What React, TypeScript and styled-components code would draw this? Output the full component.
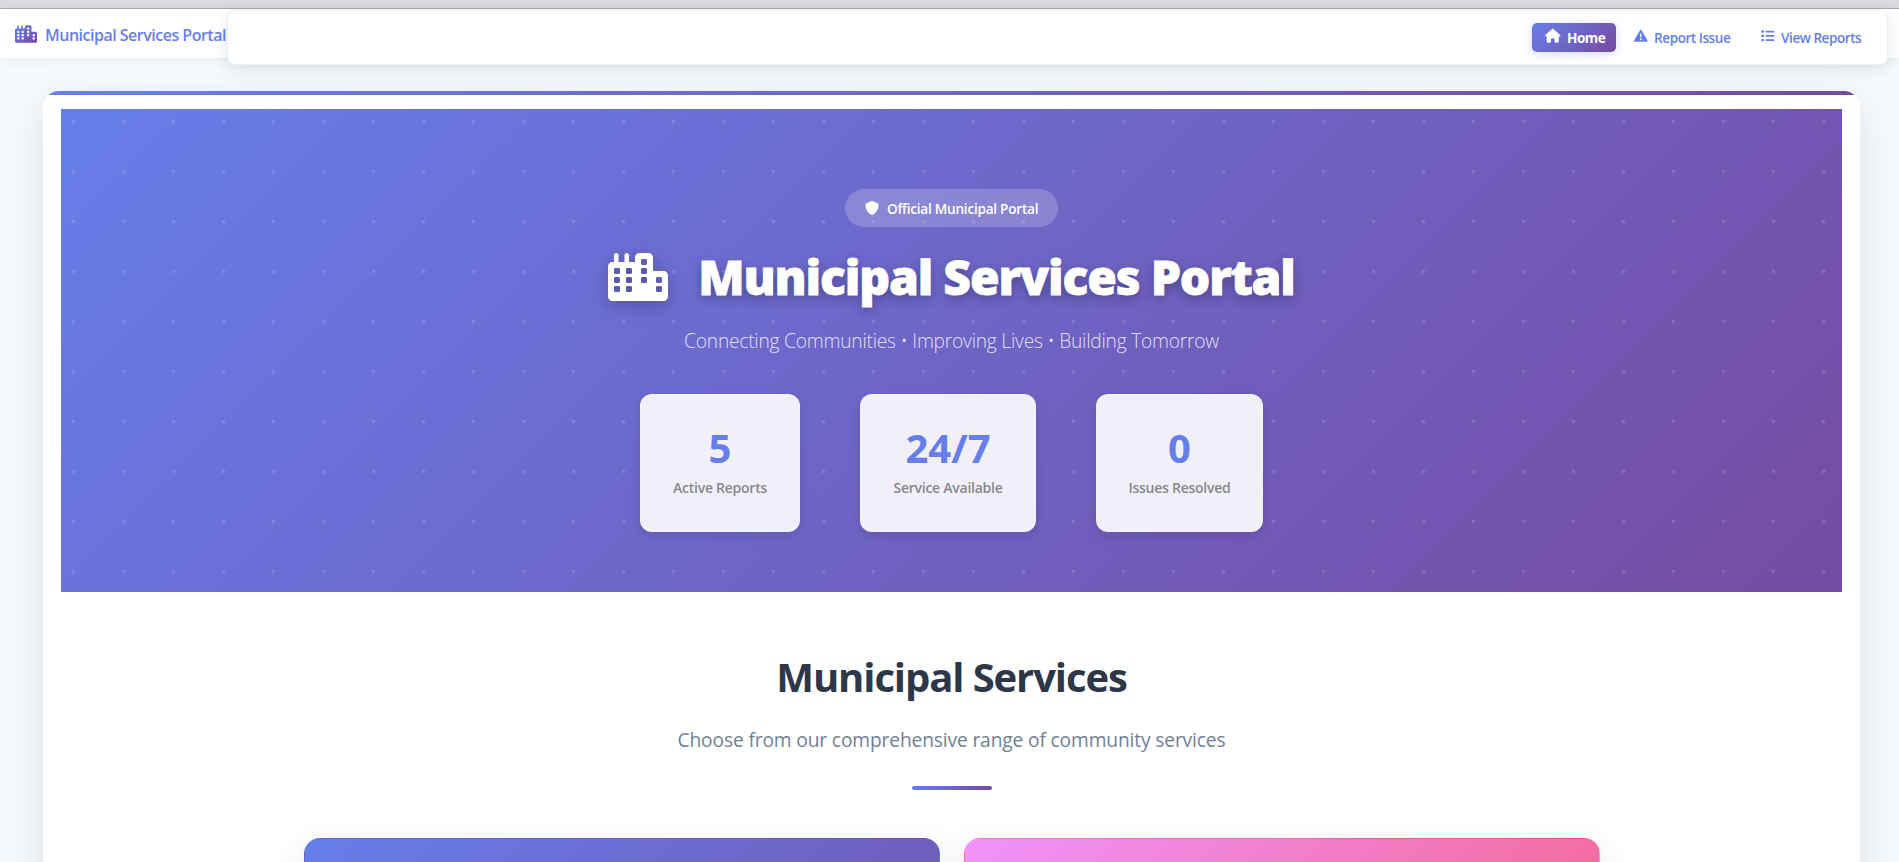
import React from "react";
import styled, { createGlobalStyle } from "styled-components";
import { FaCity, FaHouse, FaTriangleExclamation, FaList, FaShield } from "react-icons/fa6";

const brandGradient = "linear-gradient(135deg, #667eea 0%, #764ba2 100%)";

const GlobalStyle = createGlobalStyle`
  *, *::before, *::after { box-sizing: border-box; }
  html, body { margin: 0; padding: 0; }
  body {
    height: 862px;
    overflow: hidden;
    background: #f7fafc;
    font-family: "Open Sans", "Noto Sans", sans-serif;
    color: #2d3748;
  }
  h1, h2, p { margin: 0; }
`;

const Page = styled.div`
  height: 862px;
  overflow: hidden;
  background: linear-gradient(135deg, #f5fafe 0%, #f7fafc 100%);
`;

const WindowEdge = styled.div`
  height: 9px;
  background: #d9dadf;
  border-bottom: 1px solid #a9abb0;
`;

const Header = styled.header`
  position: relative;
  z-index: 2;
  display: flex;
  align-items: flex-start;
  height: 50px;
  padding: 1px 11px 0 15px;
  background: #fff;
  border-bottom: 1px solid #eeeffc;
  box-shadow: 0 2px 10px rgba(0, 0, 0, 0.05);
`;

const Brand = styled.a`
  display: flex;
  align-items: center;
  flex: none;
  gap: 8px;
  width: 212px;
  height: 49px;
  color: #667eea;
  font-size: 16px;
  font-weight: 600;
  line-height: 1;
  letter-spacing: -0.5px;
  white-space: nowrap;

  svg { margin-bottom: 2px; flex: none; }
`;

const Nav = styled.nav`
  display: flex;
  flex: 1;
  justify-content: flex-end;
  align-items: center;
  gap: 5px;
  height: 55px;
  padding: 0 11px;
  background: #fff;
  border: 1px solid #eeeffc;
  border-radius: 8px;
  box-shadow: 0 4px 16px rgba(0, 0, 0, 0.1);
`;

const NavItem = styled.a<{ $active?: boolean; $width: number }>`
  display: flex;
  align-items: center;
  justify-content: flex-start;
  width: ${(p) => p.$width}px;
  height: 29px;
  padding-left: 13px;
  border-radius: 5px;
  color: ${(p) => (p.$active ? "#fff" : "#667eea")};
  background: ${(p) => (p.$active ? brandGradient : "none")};
  box-shadow: ${(p) => (p.$active ? "0 2px 8px rgba(102, 126, 234, 0.3)" : "none")};
  font-size: 13.6px;
  font-weight: ${(p) => (p.$active ? 700 : 600)};
  letter-spacing: -0.48px;
  white-space: nowrap;

  svg { flex: none; margin: 0 6.5px 3px 0; }
`;

const Main = styled.main`
  position: relative;
  width: 1817px;
  height: 900px;
  margin: 32px 0 0 43px;
  padding: 18px;
  background: #fff;
  border-radius: 16px;
  box-shadow: 0 10px 40px rgba(0, 0, 0, 0.1);
`;

const AccentClip = styled.div`
  position: absolute;
  inset: 0;
  border-radius: 16px;
  overflow: hidden;
  pointer-events: none;

  &::before {
    content: "";
    display: block;
    height: 4px;
    background: linear-gradient(90deg, #667eea, #764ba2);
  }
`;

const Hero = styled.section`
  display: flex;
  flex-direction: column;
  align-items: center;
  height: 483px;
  padding-top: 80px;
  background:
    radial-gradient(circle at 12.5px 12.5px, rgba(255, 255, 255, 0.13) 1.7px, transparent 2.2px) 0 0 / 50px 50px,
    ${brandGradient};
`;

const Badge = styled.div`
  display: flex;
  align-items: center;
  gap: 8px;
  width: 213px;
  height: 38px;
  padding-left: 20px;
  border-radius: 19px;
  background: rgba(255, 255, 255, 0.2);
  color: #fff;
  font-size: 13.6px;
  font-weight: 600;
  letter-spacing: -0.25px;
  white-space: nowrap;

  svg { flex: none; }
`;

const HeroTitle = styled.h1`
  display: flex;
  align-items: center;
  gap: 30px;
  height: 58px;
  margin-top: 21px;
  color: #fff;
  font-size: 48px;
  font-weight: 800;
  line-height: 58px;
  letter-spacing: -1.15px;
  white-space: nowrap;
  text-shadow: 0 4px 12px rgba(0, 0, 0, 0.3);
  -webkit-text-stroke: 0.8px #fff;

  svg { filter: drop-shadow(0 4px 8px rgba(0, 0, 0, 0.25)); }
`;

const HeroSubtitle = styled.p`
  height: 32px;
  margin-top: 19px;
  color: rgba(255, 255, 255, 0.8);
  font-size: 19.2px;
  font-weight: 300;
  line-height: 32px;
  letter-spacing: -0.23px;
  white-space: nowrap;
`;

const Stats = styled.div`
  display: flex;
  gap: 60px;
  margin-top: 37px;
`;

const StatCard = styled.div<{ $width: number }>`
  display: flex;
  flex-direction: column;
  align-items: center;
  width: ${(p) => p.$width}px;
  height: 138px;
  padding-top: 31px;
  border: 1px solid rgba(255, 255, 255, 0.3);
  border-radius: 12px;
  background: rgba(255, 255, 255, 0.9);
  box-shadow: 0 4px 12px rgba(0, 0, 0, 0.1);
`;

const StatValue = styled.div`
  color: #667eea;
  font-size: 40px;
  font-weight: 700;
  line-height: 44px;
`;

const StatLabel = styled.div`
  margin-top: 7px;
  color: #88888d;
  font-size: 14px;
  font-weight: 600;
  line-height: 22px;
  letter-spacing: -0.25px;
  white-space: nowrap;
`;

const SectionHead = styled.div`
  display: flex;
  flex-direction: column;
  align-items: center;
  padding-top: 61px;
`;

const SectionTitle = styled.h2`
  color: #2d3748;
  font-size: 40px;
  font-weight: 700;
  line-height: 48px;
  letter-spacing: -1.1px;
`;

const SectionText = styled.p`
  margin-top: 23px;
  color: #718096;
  font-size: 19.2px;
  line-height: 32px;
  letter-spacing: -0.14px;
`;

const Divider = styled.div`
  width: 80px;
  height: 4px;
  margin-top: 30px;
  border-radius: 2px;
  background: linear-gradient(90deg, #667eea, #764ba2);
`;

const ServiceGrid = styled.div`
  display: grid;
  grid-template-columns: 1fr 1fr;
  gap: 24px;
  width: 1296px;
  margin: 48px auto 0;
`;

const ServiceCard = styled.article<{ $from: string; $to: string }>`
  height: 400px;
  border: 1px solid transparent;
  border-radius: 16px;
  background: linear-gradient(135deg, ${(p) => p.$from} 0%, ${(p) => p.$to} 100%);
  box-shadow: 0 8px 32px rgba(0, 0, 0, 0.1);
`;

const GradientDefs = styled.svg`
  position: absolute;
`;

const BrandMark = styled(FaCity)`
  path { fill: url(#brand-fill); }
`;

const BrandIcon = () => (
  <>
    <GradientDefs width="0" height="0">
      <linearGradient id="brand-fill" x1="0" y1="0" x2="1" y2="1">
        <stop offset="0" stopColor="#667eea" />
        <stop offset="1" stopColor="#764ba2" />
      </linearGradient>
    </GradientDefs>
    <BrandMark size={22} />
  </>
);

const stats = [
  { value: "5", label: "Active Reports", width: 160 },
  { value: "24/7", label: "Service Available", width: 176 },
  { value: "0", label: "Issues Resolved", width: 167 },
];

export default function App() {
  return (
    <Page>
      <GlobalStyle />
      <WindowEdge />
      <Header>
        <Brand>
          <BrandIcon />
          Municipal Services Portal
        </Brand>
        <Nav>
          <NavItem $active $width={84}><FaHouse size={15.5} />Home</NavItem>
          <NavItem $width={122}><FaTriangleExclamation size={13.6} />Report Issue</NavItem>
          <NavItem $width={128}><FaList size={13.6} />View Reports</NavItem>
        </Nav>
      </Header>
      <Main>
        <AccentClip />
        <Hero>
          <Badge><FaShield size={14} />Official Municipal Portal</Badge>
          <HeroTitle><FaCity size={60} />Municipal Services Portal</HeroTitle>
          <HeroSubtitle>Connecting Communities • Improving Lives • Building Tomorrow</HeroSubtitle>
          <Stats>
            {stats.map((s) => (
              <StatCard key={s.label} $width={s.width}>
                <StatValue>{s.value}</StatValue>
                <StatLabel>{s.label}</StatLabel>
              </StatCard>
            ))}
          </Stats>
        </Hero>
        <SectionHead>
          <SectionTitle>Municipal Services</SectionTitle>
          <SectionText>Choose from our comprehensive range of community services</SectionText>
          <Divider />
        </SectionHead>
        <ServiceGrid>
          <ServiceCard $from="#667eea" $to="#764ba2" />
          <ServiceCard $from="#f093fb" $to="#f5576c" />
        </ServiceGrid>
      </Main>
    </Page>
  );
}
